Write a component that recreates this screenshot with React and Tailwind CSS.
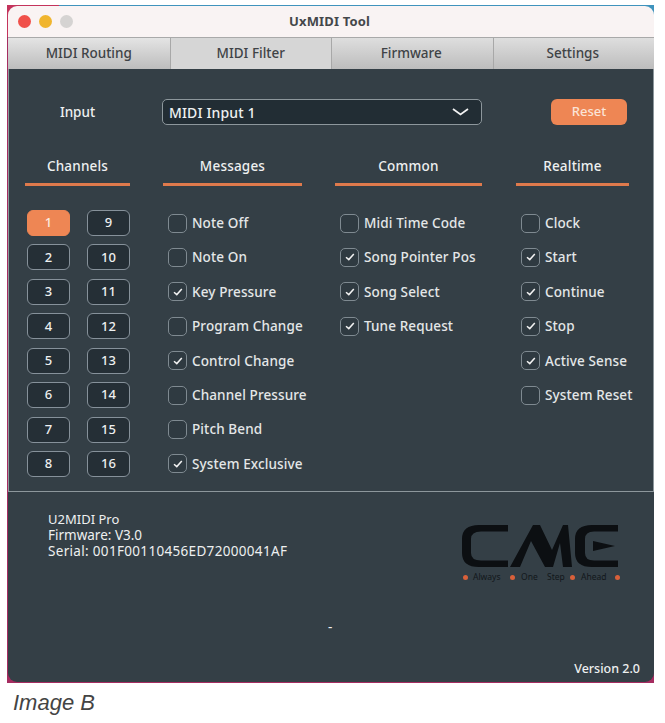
const channels = [
  ['1', '9'],
  ['2', '10'],
  ['3', '11'],
  ['4', '12'],
  ['5', '13'],
  ['6', '14'],
  ['7', '15'],
  ['8', '16'],
]

const messages = [
  ['Note Off', false],
  ['Note On', false],
  ['Key Pressure', true],
  ['Program Change', false],
  ['Control Change', true],
  ['Channel Pressure', false],
  ['Pitch Bend', false],
  ['System Exclusive', true],
]

const common = [
  ['Midi Time Code', false],
  ['Song Pointer Pos', true],
  ['Song Select', true],
  ['Tune Request', true],
]

const realtime = [
  ['Clock', false],
  ['Start', true],
  ['Continue', true],
  ['Stop', true],
  ['Active Sense', true],
  ['System Reset', false],
]

function ChannelButton({ label, active }) {
  return (
    <button
      className={`h-[26px] w-[43px] rounded-[6px] border text-[13px] font-medium ${
        active
          ? 'border-[#ee8654] bg-[#ee8654] text-[#fbe9df]'
          : 'border-[#86919a] bg-[#252f36] text-[#eef0f0]'
      }`}
    >
      {label}
    </button>
  )
}

function Check({ label, checked }) {
  return (
    <div className="flex h-[26px] items-center">
      <span className="flex h-[19px] w-[19px] items-center justify-center rounded-[5px] border border-[#7f8a91] bg-[#2f3a41]">
        {checked && (
          <svg width="10" height="8" viewBox="0 0 10 8" fill="none">
            <path d="M1 4.2 L3.8 6.6 L8.8 1" stroke="#f2f2f2" strokeWidth="1.5" />
          </svg>
        )}
      </span>
      <span className="ml-[5px] whitespace-nowrap text-[13.5px] font-medium tracking-[0.12px] text-[#e4e7e8]">{label}</span>
    </div>
  )
}

function Heading({ children, className }) {
  return (
    <div className={className}>
      <div className="h-[24px] text-center text-[13.5px] font-medium leading-[24px] tracking-[0.2px] text-[#eef0f0]">{children}</div>
      <div className="mt-[5px] h-[3px] bg-[#df7a4c]" />
    </div>
  )
}

function CheckList({ items, className }) {
  return (
    <div className={`flex flex-col gap-[8.43px] ${className}`}>
      {items.map(([label, checked]) => (
        <Check key={label} label={label} checked={checked} />
      ))}
    </div>
  )
}

function CmeLogo() {
  return (
    <svg width="160" height="46" viewBox="0 0 160 46" fill="#0c0f12">
      {/* C */}
      <path d="M48 3 H19 Q2 3 2 17 V31 Q2 45 19 45 H48 V38.5 H21 Q11 38.5 11 31 V17 Q11 9.5 21 9.5 H48 Z" />
      {/* M */}
      <path d="M50 45 L73 3 H80 L92 28 L103 3 H108 L112 45 H103 L100 21 L93 45 H85 L71 19 L60 45 Z" />
      {/* E */}
      <path d="M158 3 H132 Q115 3 115 17 V31 Q115 45 132 45 H158 V38.5 H134 Q125 38.5 125 31 V17 Q125 9.5 134 9.5 H158 Z" />
      <path d="M133 19 L155 24 L133 29 Z" />
    </svg>
  )
}

function Dot({ className }) {
  return <span className={`h-[5px] w-[5px] shrink-0 rounded-full bg-[#d8603a] ${className}`} />
}

function App() {
  return (
    <div className="h-[723px] w-[665px] overflow-hidden bg-white pl-[7px] pt-[5px] font-['Noto_Sans',sans-serif]">
      <div className="w-[647px] bg-[#a52c60] pb-px">
        <div className="bg-[linear-gradient(to_right,#c4335c_8%,#3f93bd_8%)] pt-px">
          <div className="pl-px">
            <div className="flex h-[31px] items-center rounded-t-[9px] bg-[#f9f3f3] pl-[10px]">
              <span className="h-[13px] w-[13px] rounded-full bg-[#f0504a]" />
              <span className="ml-[8px] h-[13px] w-[13px] rounded-full bg-[#f0b52e]" />
              <span className="ml-[8px] h-[13px] w-[13px] rounded-full bg-[#d5d3d2]" />
              <span className="ml-[216px] text-[13px] font-bold tracking-[0.15px] text-[#44474a]">UxMIDI Tool</span>
            </div>
          </div>
        </div>
        <div className="ml-px rounded-b-[9px] bg-[#343f46]">
          <div className="grid h-[32px] grid-cols-4 border-t border-[#a9a9a9] text-[13.5px] font-medium text-[#3f4346]">
            <div className="flex items-center justify-center bg-gradient-to-b from-[#e4e4e4] to-[#bdbdbd]">MIDI Routing</div>
            <div className="flex items-center justify-center border-l border-[#a8a8a8] bg-[#d6d6d6]">MIDI Filter</div>
            <div className="flex items-center justify-center border-l border-[#a8a8a8] bg-gradient-to-b from-[#dedede] to-[#bdbdbd] pr-[2px]">Firmware</div>
            <div className="flex items-center justify-center border-l border-[#a8a8a8] bg-gradient-to-b from-[#dedede] to-[#bdbdbd] pr-[2px]">Settings</div>
          </div>

          <div className="h-[423px] border-x border-b border-[#8d979c] pl-[16px] pt-[30px]">
            <div className="flex h-[26px] items-center">
              <div className="w-[105px] text-center text-[13.5px] font-medium text-[#eef0f0]">Input</div>
              <div className="ml-[32px] flex h-[26px] w-[320px] items-center justify-between rounded-[5px] border border-[#8d979c] bg-[#222d34] pl-[6px] pr-[12px] text-[14px] font-medium tracking-[0.15px] text-[#eef0f0]">
                MIDI Input 1
                <svg width="17" height="8" viewBox="0 0 17 8" fill="none">
                  <path d="M1 1 L8.5 6.5 L16 1" stroke="#f2f2f2" strokeWidth="1.8" />
                </svg>
              </div>
              <button className="ml-[69px] h-[26px] w-[76px] rounded-[6px] bg-[#ee8654] text-[13px] font-medium text-[#fbe3d6]">
                Reset
              </button>
            </div>

            <div className="mt-[29px] flex">
              <Heading className="w-[105px]">Channels</Heading>
              <Heading className="ml-[33px] w-[139px]">Messages</Heading>
              <Heading className="ml-[33px] w-[147px]">Common</Heading>
              <Heading className="ml-[34px] w-[113px]">Realtime</Heading>
            </div>

            <div className="mt-[24px] flex">
              <div className="ml-[2px] flex w-[103px] flex-col gap-[8.43px]">
                {channels.map(([a, b], i) => (
                  <div key={a} className="flex gap-[17px]">
                    <ChannelButton label={a} active={i === 0} />
                    <ChannelButton label={b} />
                  </div>
                ))}
              </div>
              <CheckList items={messages} className="ml-[38px] w-[172px]" />
              <CheckList items={common} className="w-[181px]" />
              <CheckList items={realtime} />
            </div>
          </div>

          <div className="h-[190px] pl-[40px] pr-[14px] text-[13.5px] text-[#eef0f0]">
            <div className="flex">
              <div className="w-[412px] pt-[19px] leading-[16px]">
                <div className="text-[13px]">U2MIDI Pro</div>
                <div>Firmware: V3.0</div>
                <div className="tracking-[0.32px]">Serial: 001F00110456ED72000041AF</div>
              </div>
              <div className="pt-[30px]">
                <CmeLogo />
                <div className="mt-[3px] flex h-[12px] w-[160px] items-center whitespace-nowrap text-[8.5px] leading-[12px] text-[#12171b]">
                  <Dot className="ml-[2.5px]" />
                  <span className="ml-[5.5px] w-[30px]">Always</span>
                  <Dot className="ml-[6.5px]" />
                  <span className="ml-[6.5px] w-[17px]">One</span>
                  <span className="ml-[9px] w-[17px]">Step</span>
                  <Dot className="ml-[5.5px]" />
                  <span className="ml-[6.5px] w-[27px]">Ahead</span>
                  <Dot className="ml-[6.5px]" />
                </div>
              </div>
            </div>
            <div className="mt-[36px] pl-[280px] leading-[16px]">-</div>
            <div className="mt-[25px] text-right text-[12.5px] font-medium">Version 2.0</div>
          </div>
        </div>
      </div>
      <div className="mt-[7px] pl-[6px] font-['Liberation_Sans',sans-serif] text-[22px] italic leading-[26px] text-[#444444]">Image B</div>
    </div>
  )
}

export default App
